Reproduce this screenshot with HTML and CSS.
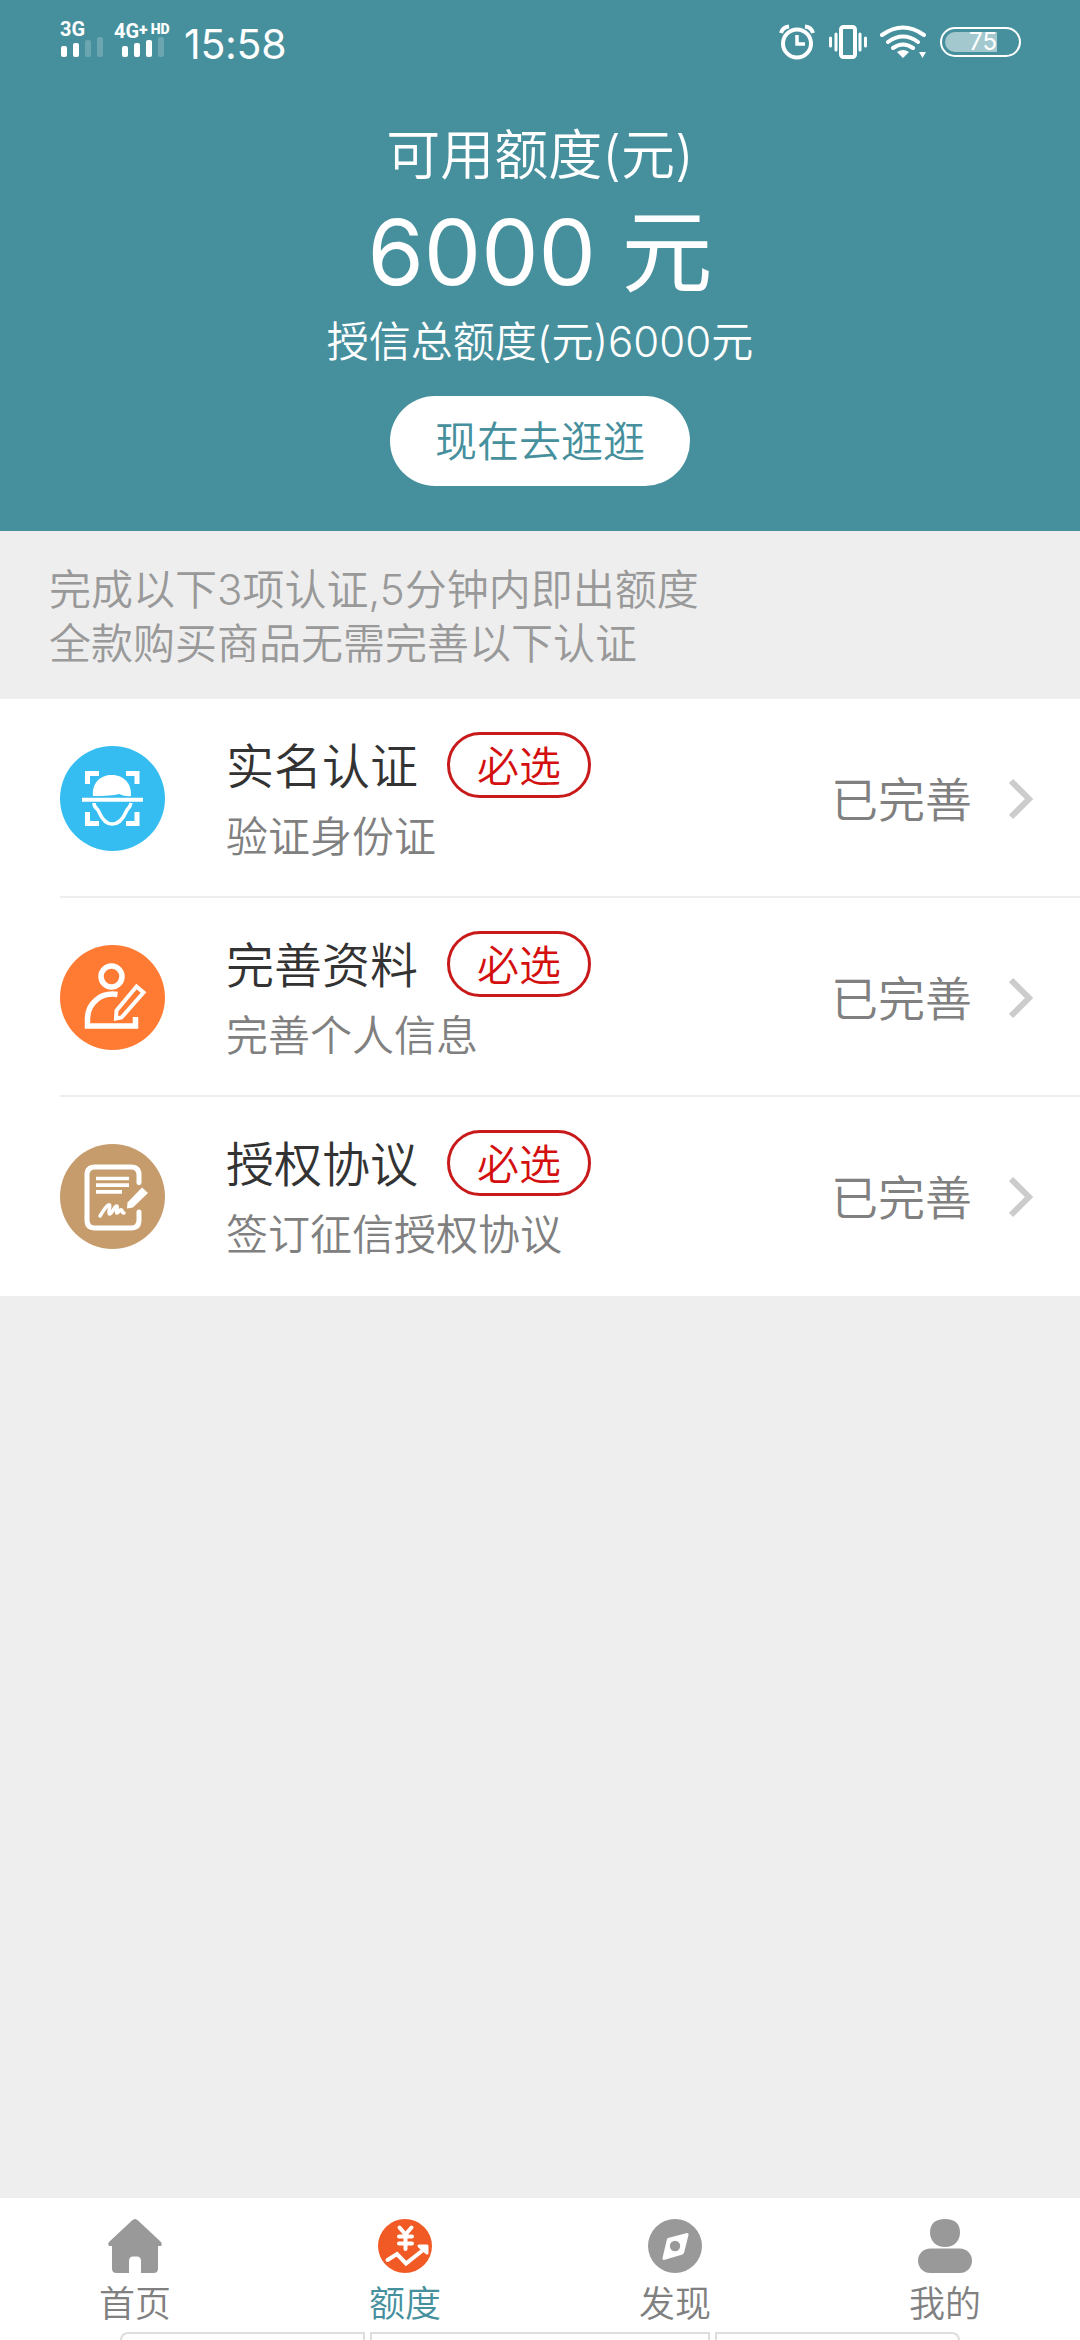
FILE: index.html
```html
<!doctype html>
<html lang="zh-CN">
<head>
    <meta charset="UTF-8">
    <title>额度</title>
    <link rel="stylesheet" href="styles.css">
</head>
<body>
<div class="page">
    <div class="header">
        <div class="status">
            <div class="signal sim1">
                <p>3G</p>
                <svg width="44" height="20" viewBox="0 0 44 20" fill="#fff">
                    <rect x="1" y="9" width="6" height="11" rx="2"/>
                    <rect x="13" y="6" width="6" height="14" rx="2"/>
                    <rect x="25" y="3" width="6" height="17" rx="2" opacity=".2"/>
                    <rect x="37" y="0" width="6" height="20" rx="2" opacity=".2"/>
                </svg>
            </div>
            <div class="signal sim2">
                <p>4G<b class="plus">+</b><b class="hd">HD</b></p>
                <svg width="44" height="20" viewBox="0 0 44 20" fill="#fff">
                    <rect x="1" y="9" width="6" height="11" rx="2"/>
                    <rect x="13" y="6" width="6" height="14" rx="2"/>
                    <rect x="25" y="3" width="6" height="17" rx="2"/>
                    <rect x="37" y="0" width="6" height="20" rx="2" opacity=".2"/>
                </svg>
            </div>
            <span class="time">15:58</span>
            <div class="sys">
                <svg width="36" height="36" viewBox="0 0 36 36" fill="none" stroke="#fff">
                    <circle cx="18" cy="19.500" r="14" stroke-width="4"/>
                    <path d="M18 11v9h8" stroke-width="3.500"/>
                    <path d="M2 9a9 9 0 0 1 8-6.500M34 9a9 9 0 0 0-8-6.500" stroke-width="4"/>
                </svg>
                <svg class="vibrate" width="38" height="36" viewBox="0 0 38 36" fill="none" stroke="#fff" stroke-linecap="round">
                    <rect x="12" y="3" width="14" height="30" rx="2.500" stroke-width="4"/>
                    <path d="M7 10v16M31 10v16M1.500 14v8M36.500 14v8" stroke-width="3"/>
                </svg>
                <svg class="wifi" width="48" height="36" viewBox="0 0 48 36" fill="none" stroke="#fff" stroke-width="4" stroke-linecap="round">
                    <path d="M3 11Q24-4 45 11M9 18Q24 7 39 18M14 24Q24 17 34 24"/>
                    <path d="M18 28q6-4 12 0l-6 6z" fill="#fff" stroke="none"/>
                    <path d="M40 28h7l-3.500 6z" fill="#fff" stroke="none"/>
                </svg>
                <div class="battery"><span>75</span></div>
            </div>
        </div>
        <p class="label">可用额度(元)</p>
        <p class="money">6000 元</p>
        <p class="total">授信总额度(元)6000元</p>
        <a class="btn">现在去逛逛</a>
    </div>
    <div class="notice">
        <p>完成以下3项认证,5分钟内即出额度</p>
        <p>全款购买商品无需完善以下认证</p>
    </div>
    <ul class="list">
        <li>
            <svg class="icon" width="105" height="105" viewBox="0 0 105 105" fill="none" stroke="#fff">
                <circle cx="52.500" cy="52.500" r="52.500" fill="#35bdf2" stroke="none"/>
                <path d="M27.500 38V27.500H39M66 27.500h11V38M27.500 66v11.500H39M66 77.500h11V66" stroke-width="5"/>
                <path d="M33 50C32 37 40 29 52 29s20 9 19 21q-5 1-12-2-7 2-26 2z" fill="#fff" stroke="none"/>
                <path d="M22 53.700h61" stroke-width="4"/>
                <path d="M34 57c0 6 4 5 5 9 3 7 7 12 13 12s11-5 14-12c1-4 4-3 5-9" stroke-width="3.500"/>
            </svg>
            <div class="info">
                <h3>实名认证<span class="tag">必选</span></h3>
                <p>验证身份证</p>
            </div>
            <span class="state">已完善</span>
            <svg class="arrow" width="24" height="42" viewBox="0 0 24 42" fill="none" stroke="#ccc" stroke-width="6"><path d="M2 3l18 18L2 39"/></svg>
        </li>
        <li>
            <svg class="icon" width="105" height="105" viewBox="0 0 105 105" fill="none" stroke="#fff">
                <circle cx="52.500" cy="52.500" r="52.500" fill="#ff7a33" stroke="none"/>
                <circle cx="51.500" cy="31.500" r="10.500" stroke-width="5.500"/>
                <path d="M57.500 49.500C41 47 27.500 58 27.500 74v7h48V72" stroke-width="5.500"/>
                <path d="M76.500 41.500l7 6-22 25-5.500 1 .5-8z" stroke-width="4"/>
            </svg>
            <div class="info">
                <h3>完善资料<span class="tag">必选</span></h3>
                <p>完善个人信息</p>
            </div>
            <span class="state">已完善</span>
            <svg class="arrow" width="24" height="42" viewBox="0 0 24 42" fill="none" stroke="#ccc" stroke-width="6"><path d="M2 3l18 18L2 39"/></svg>
        </li>
        <li>
            <svg class="icon" width="105" height="105" viewBox="0 0 105 105" fill="none" stroke="#fff">
                <circle cx="52.500" cy="52.500" r="52.500" fill="#c69c6d" stroke="none"/>
                <path d="M79 38.500V31q0-8-8-8H35q-8 0-8 8v45q0 8 8 8h36q8 0 8-8v-8" stroke-width="5" stroke-linecap="round"/>
                <path d="M36 34.500h33M36 41.200h33M36 47.800h26" stroke-width="3.700"/>
                <path d="M40 72c5-8 8-12 9.500-11s-2 8 0 9 5-8 7-8-1 7 .5 7 3-4 4.500-3 0 3 2.500 3" stroke-width="3.500" stroke-linecap="round" stroke-linejoin="round"/>
                <path d="M82 43.500l6 5.500-15 14.500-6 1 .5-6z" fill="#fff" stroke="none"/>
            </svg>
            <div class="info">
                <h3>授权协议<span class="tag">必选</span></h3>
                <p>签订征信授权协议</p>
            </div>
            <span class="state">已完善</span>
            <svg class="arrow" width="24" height="42" viewBox="0 0 24 42" fill="none" stroke="#ccc" stroke-width="6"><path d="M2 3l18 18L2 39"/></svg>
        </li>
    </ul>
    <div class="footer">
        <ul class="nav">
            <li>
                <svg width="54" height="54" viewBox="0 0 54 54" fill="#999">
                    <path d="M24 1.500q3-3 6 0L53 23q1.500 2 0 4h-3v22.500q0 4.500-4.500 4.500H33V42q0-4.500-4-4.500h-4q-4 0-4 4.500v12H8.500Q4 54 4 49.500V27H1q-1.500-2 0-4z"/>
                </svg>
                <p>首页</p>
            </li>
            <li class="selected">
                <svg width="54" height="54" viewBox="0 0 54 54" fill="none" stroke="#fff" stroke-linecap="round" stroke-linejoin="round">
                    <circle cx="27" cy="27" r="27" fill="#f15a24" stroke="none"/>
                    <path d="M21.500 8.500l6 7 6-7M27.500 16v14M21 17.500h13M21 24.500h13" stroke-width="4"/>
                    <path d="M9.500 41l9.500-6 9 9.500 19-15" stroke-width="4" stroke-linejoin="miter"/>
                    <path d="M41 27h8v7z" fill="#fff" stroke-width="3"/>
                </svg>
                <p>额度</p>
            </li>
            <li>
                <svg width="54" height="54" viewBox="0 0 54 54" fill="#999">
                    <circle cx="27" cy="27" r="27"/>
                    <path d="M20 19l19-5q2 0 1.500 2L36 34l-1.500 1.500L16 41q-2 0-1.500-2L19 20z" fill="#fff"/>
                    <circle cx="27" cy="27" r="5.200"/>
                </svg>
                <p>发现</p>
            </li>
            <li>
                <svg width="54" height="54" viewBox="0 0 54 54" fill="#999">
                    <path d="M27 0c10 0 15 5 15 13.500C42 22 36 28 27 28s-15-6-15-14.500C12 5 17 0 27 0z"/>
                    <rect x="0" y="29.500" width="54" height="24.500" rx="12.250"/>
                </svg>
                <p>我的</p>
            </li>
        </ul>
        <div class="keys"><i></i><i class="mid"></i><i></i></div>
    </div>
</div>
</body>
</html>
```

FILE: styles.css
```css
*{
    margin: 0;
    padding: 0;
    box-sizing: border-box;
}
ul{
    list-style: none;
}
svg{
    display: block;
    flex: none;
}
body{
    background: #eee;
    font-family: Inter, "Noto Sans CJK SC", sans-serif;
    font-weight: 350;
}
.page{
    height: 2340px;
    overflow: hidden;
    display: flex;
    flex-direction: column;
}
.header{
    height: 531px;
    background: #46909d;
    color: #fff;
    display: flex;
    flex-direction: column;
    align-items: center;
}
.status{
    width: 100%;
    height: 80px;
    padding: 22px 60px 0;
    display: flex;
    align-items: flex-start;
}
.signal p{
    height: 15px;
    line-height: 15px;
    font-size: 20px;
    font-weight: 700;
    font-family: Roboto, sans-serif;
    white-space: nowrap;
}
.sim1{
    width: 54px;
}
.sim2{
    width: 70px;
}
.sim2 svg{
    margin-left: 7px;
}
.plus{
    font-size: 16px;
    vertical-align: 3px;
}
.hd{
    font-size: 14px;
    font-weight: 900;
    margin-left: 3px;
    vertical-align: 4px;
}
.time{
    height: 46px;
    line-height: 45px;
    font-size: 41px;
    font-weight: 400;
    letter-spacing: -0.3px;
}
.sys{
    margin-left: auto;
    padding-top: 2px;
    display: flex;
}
.vibrate{
    margin-left: 14px;
}
.wifi{
    margin-left: 12px;
}
.battery{
    width: 81px;
    height: 30px;
    margin: 3px -1px 0 13px;
    padding: 3px;
    border: 2px solid #fff;
    border-radius: 15px;
}
.battery span{
    display: block;
    width: 52px;
    height: 20px;
    line-height: 20px;
    font-size: 24px;
    font-weight: 400;
    text-align: right;
    background: rgba(255,255,255,.5);
    border-radius: 10px 0 0 10px;
}
.label{
    margin-top: 41px;
    height: 70px;
    line-height: 70px;
    font-size: 54px;
}
.money{
    height: 124px;
    line-height: 123px;
    font-size: 91px;
    font-weight: 400;
}
.total{
    height: 56px;
    line-height: 53px;
    font-size: 42px;
}
.btn{
    width: 300px;
    height: 90px;
    margin-top: 25px;
    border-radius: 45px;
    background: #fff;
    color: #46909d;
    line-height: 92px;
    font-size: 42px;
    text-align: center;
}
.notice{
    height: 168px;
    padding: 32px 49px 0;
    color: #999;
    font-size: 42px;
    line-height: 54px;
}
.list{
    background: #fff;
}
.list li{
    height: 199px;
    margin-left: 60px;
    padding: 2px 47px 0 0;
    border-bottom: 2px solid #eee;
    display: flex;
    align-items: center;
}
.list li:last-child{
    border-bottom: 0;
    padding-bottom: 2px;
}
.info{
    margin-left: 61px;
    flex: 1;
}
.info h3{
    display: flex;
    height: 66px;
    line-height: 70px;
    color: #333;
    font-size: 48px;
    font-weight: inherit;
}
.info p{
    height: 60px;
    margin-top: 8px;
    line-height: 61px;
    color: #808080;
    font-size: 42px;
}
.tag{
    width: 144px;
    height: 66px;
    margin-left: 29px;
    border: 3px solid #c81a1a;
    border-radius: 33px;
    color: #d40f0f;
    font-size: 42px;
    line-height: 64px;
    text-align: center;
}
.state{
    color: #808080;
    font-size: 47px;
    line-height: 66px;
    padding-top: 2px;
}
.arrow{
    margin-left: 37px;
}
.footer{
    height: 142px;
    margin-top: auto;
    background: #fff;
}
.nav{
    height: 134px;
    display: flex;
}
.nav li{
    flex: 1;
    padding-top: 21px;
    display: flex;
    flex-direction: column;
    align-items: center;
}
.nav p{
    margin-top: 8px;
    line-height: 46px;
    font-size: 36px;
    color: #808080;
}
.nav .selected p{
    color: #46909d;
}
.keys{
    height: 8px;
    padding: 0 120px;
    display: flex;
    gap: 5px;
    overflow: hidden;
}
.keys i{
    flex: 245;
    height: 20px;
    border: 2px solid #ddd;
    border-radius: 8px 0 0 0;
}
.keys .mid{
    flex: 340;
    border-radius: 0;
}
.keys i:last-child{
    border-radius: 0 8px 0 0;
}
```
